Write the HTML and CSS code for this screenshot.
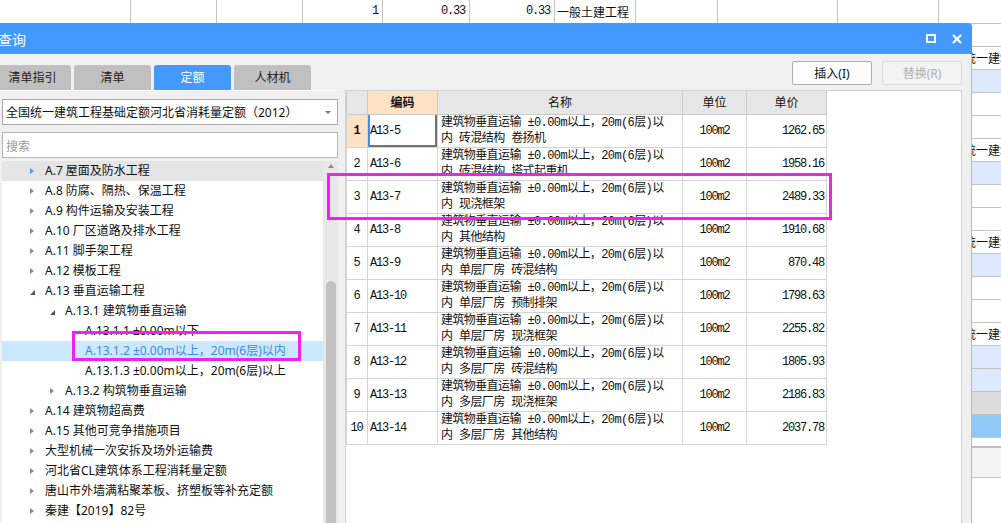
FILE: index.html
```html
<!DOCTYPE html>
<html lang="zh-CN">
<head>
<meta charset="utf-8">
<title>查询</title>
<link rel="stylesheet" href="styles.css">
</head>
<body>
<div class="sheet">
  <div class="sheet-head">
    <div class="sc c1"></div>
    <div class="sc c2"></div>
    <div class="sc c3"></div>
    <div class="sc c4 num">1</div>
    <div class="sc c5 num">0.33</div>
    <div class="sc c6 num">0.33</div>
    <div class="sc c7 txt">一般土建工程</div>
    <div class="sc c8"></div>
    <div class="sc c9"></div>
    <div class="sc c10"></div>
    <div class="sc c11"></div>
  </div>
  <div class="sr"></div>
  <div class="sr">全国统一建筑工程基础定额河北省消耗量定额</div>
  <div class="sr lb"></div>
  <div class="sr"></div>
  <div class="sr"></div>
  <div class="sr">全国统一建筑工程基础定额河北省消耗量定额</div>
  <div class="sr lb"></div>
  <div class="sr"></div>
  <div class="sr"></div>
  <div class="sr">全国统一建筑工程基础定额河北省消耗量定额</div>
  <div class="sr lb"></div>
  <div class="sr"></div>
  <div class="sr"></div>
  <div class="sr">全国统一建筑工程基础定额河北省消耗量定额</div>
  <div class="sr lb"></div>
  <div class="sr lb"></div>
  <div class="sr gr"></div>
  <div class="sr bl"></div>
  <div class="sr short"></div>
  <div class="sr foot"></div>
</div>

<div class="dialog">
  <div class="titlebar">
    <span class="title">查询</span>
    <div class="win-btns">
      <span class="ico-max"></span>
      <svg class="ico-close" width="10" height="10" viewBox="0 0 10 10"><path d="M1 1L9 9M9 1L1 9" stroke="#fff" stroke-width="2.2" fill="none"/></svg>
    </div>
  </div>
  <div class="toolbar">
    <div class="tabs">
      <div class="tab">清单指引</div>
      <div class="tab">清单</div>
      <div class="tab active">定额</div>
      <div class="tab">人材机</div>
    </div>
    <div class="actions">
      <button class="btn">插入(I)</button>
      <button class="btn" disabled>替换(R)</button>
    </div>
  </div>
  <div class="main">
    <div class="left">
      <div class="combo"><span class="combo-text">全国统一建筑工程基础定额河北省消耗量定额（2012）</span><span class="caret"></span></div>
      <input class="search" type="text" placeholder="搜索">
      <div class="tree-wrap">
        <ul class="tree">
          <li class="node l1 hover"><span class="tw closed"></span>A.7 屋面及防水工程</li>
          <li class="node l1"><span class="tw closed"></span>A.8 防腐、隔热、保温工程</li>
          <li class="node l1"><span class="tw closed"></span>A.9 构件运输及安装工程</li>
          <li class="node l1"><span class="tw closed"></span>A.10 厂区道路及排水工程</li>
          <li class="node l1"><span class="tw closed"></span>A.11 脚手架工程</li>
          <li class="node l1"><span class="tw closed"></span>A.12 模板工程</li>
          <li class="node l1"><span class="tw open"></span>A.13 垂直运输工程</li>
          <li class="node l2"><span class="tw open"></span>A.13.1 建筑物垂直运输</li>
          <li class="node l3"><span class="tw"></span>A.13.1.1 ±0.00m以下</li>
          <li class="node l3 selected"><span class="tw"></span>A.13.1.2 ±0.00m以上，20m(6层)以内</li>
          <li class="node l3"><span class="tw"></span>A.13.1.3 ±0.00m以上，20m(6层)以上</li>
          <li class="node l2"><span class="tw closed"></span>A.13.2 构筑物垂直运输</li>
          <li class="node l1"><span class="tw closed"></span>A.14 建筑物超高费</li>
          <li class="node l1"><span class="tw closed"></span>A.15 其他可竞争措施项目</li>
          <li class="node l1"><span class="tw closed"></span>大型机械一次安拆及场外运输费</li>
          <li class="node l1"><span class="tw closed"></span>河北省CL建筑体系工程消耗量定额</li>
          <li class="node l1"><span class="tw closed"></span>唐山市外墙满粘聚苯板、挤塑板等补充定额</li>
          <li class="node l1"><span class="tw closed"></span>秦建【2019】82号</li>
        </ul>
        <div class="vscroll"><span class="up"></span><span class="thumb"></span></div>
      </div>
    </div>
    <div class="right">
      <table class="grid">
        <colgroup><col class="k0"><col class="k1"><col class="k2"><col class="k3"><col class="k4"></colgroup>
        <thead>
          <tr><th class="rh"></th><th class="cur">编码</th><th>名称</th><th>单位</th><th>单价</th></tr>
        </thead>
        <tbody>
          <tr><td class="rn cur">1</td><td class="code focus">A13-5</td><td class="name">建筑物垂直运输 ±0.00m以上，20m(6层)以<br>内 砖混结构 卷扬机</td><td class="unit">100m2</td><td class="price">1262.65</td></tr>
          <tr><td class="rn">2</td><td class="code">A13-6</td><td class="name">建筑物垂直运输 ±0.00m以上，20m(6层)以<br>内 砖混结构 塔式起重机</td><td class="unit">100m2</td><td class="price">1958.16</td></tr>
          <tr><td class="rn">3</td><td class="code">A13-7</td><td class="name">建筑物垂直运输 ±0.00m以上，20m(6层)以<br>内 现浇框架</td><td class="unit">100m2</td><td class="price">2489.33</td></tr>
          <tr><td class="rn">4</td><td class="code">A13-8</td><td class="name">建筑物垂直运输 ±0.00m以上，20m(6层)以<br>内 其他结构</td><td class="unit">100m2</td><td class="price">1910.68</td></tr>
          <tr><td class="rn">5</td><td class="code">A13-9</td><td class="name">建筑物垂直运输 ±0.00m以上，20m(6层)以<br>内 单层厂房 砖混结构</td><td class="unit">100m2</td><td class="price">870.48</td></tr>
          <tr><td class="rn">6</td><td class="code">A13-10</td><td class="name">建筑物垂直运输 ±0.00m以上，20m(6层)以<br>内 单层厂房 预制排架</td><td class="unit">100m2</td><td class="price">1798.63</td></tr>
          <tr><td class="rn">7</td><td class="code">A13-11</td><td class="name">建筑物垂直运输 ±0.00m以上，20m(6层)以<br>内 单层厂房 现浇框架</td><td class="unit">100m2</td><td class="price">2255.82</td></tr>
          <tr><td class="rn">8</td><td class="code">A13-12</td><td class="name">建筑物垂直运输 ±0.00m以上，20m(6层)以<br>内 多层厂房 砖混结构</td><td class="unit">100m2</td><td class="price">1805.93</td></tr>
          <tr><td class="rn">9</td><td class="code">A13-13</td><td class="name">建筑物垂直运输 ±0.00m以上，20m(6层)以<br>内 多层厂房 现浇框架</td><td class="unit">100m2</td><td class="price">2186.83</td></tr>
          <tr><td class="rn">10</td><td class="code">A13-14</td><td class="name">建筑物垂直运输 ±0.00m以上，20m(6层)以<br>内 多层厂房 其他结构</td><td class="unit">100m2</td><td class="price">2037.78</td></tr>
        </tbody>
      </table>
    </div>
  </div>
</div>

<div class="mark mark-tree"></div>
<div class="mark mark-row"></div>
</body>
</html>
```

FILE: styles.css
```css
* { box-sizing: border-box; margin: 0; padding: 0; }

html, body { background: #fff; }

body {
  width: 1001px;
  height: 523px;
  overflow: hidden;
  position: relative;
  font-family: "Noto Sans", "Noto Sans CJK SC", sans-serif;
  font-size: 12px;
  color: #111;
}

/* ---------- background spreadsheet ---------- */
.sheet { width: 1001px; }

.sheet-head {
  display: flex;
  height: 24px;
  border-bottom: 1px solid #c4c4c4;
}

.sc {
  flex: none;
  height: 23px;
  border-right: 1px solid #c4c4c4;
  padding: 0 4px 0 3px;
  line-height: 23px;
  white-space: nowrap;
  overflow: hidden;
}
.sc.num {
  text-align: right;
  font-family: "Liberation Mono", monospace;
  letter-spacing: -1.2px;
  font-size: 12px;
}
.sc.txt { font-size: 12px; font-family: "Noto Sans CJK SC", sans-serif; padding-left: 2px; }
.c1 { width: 131px; }
.c2 { width: 86px; }
.c3 { width: 86px; }
.c4 { width: 80px; }
.c5 { width: 87px; }
.c6 { width: 85px; }
.c7 { width: 81px; }
.c8 { width: 82px; }
.c9 { width: 120px; }
.c10 { width: 101px; }
.c11 { flex: 1; border-right: 0; }

.sr {
  height: 23px;
  border-bottom: 1px solid #c4c4c4;
  padding-left: 940px;
  line-height: 22px;
  white-space: nowrap;
  overflow: hidden;
  font-family: "Noto Sans CJK SC", sans-serif;
  font-size: 12px;
  color: #111;
}
.sr.lb { background: #dde9fc; }
.sr.gr { background: #dcdcdc; }
.sr.bl { background: #90c8f8; }
.sr.short { height: 10px; border-bottom: 2px solid #bdbdbd; }
.sr.foot { height: 30px; background: #f3f3f3; }

/* ---------- dialog ---------- */
.dialog {
  position: absolute;
  left: -8px;
  top: 23px;
  width: 980px;
  height: 510px;
  background: #f0f0f0;
  border-right: 1px solid #b8b8b8;
  border-radius: 0 4px 0 0;
  display: flex;
  flex-direction: column;
}

.titlebar {
  flex: none;
  height: 31px;
  margin-right: -1px;
  background: #4499fe;
  border-radius: 0 4px 0 0;
  display: flex;
  align-items: center;
  padding: 0 10px 0 6px;
  color: #fff;
}
.title {
  font-family: "Noto Sans CJK SC", sans-serif;
  font-size: 14px;
  line-height: 20px;
}
.win-btns {
  margin-left: auto;
  display: flex;
  align-items: center;
  gap: 16px;
}
.ico-max {
  display: block;
  width: 10px;
  height: 9px;
  border: 2px solid #fff;
}
.ico-close { display: block; }

.toolbar {
  flex: none;
  height: 36px;
  display: flex;
  justify-content: space-between;
  padding-right: 9px;
}
.tabs {
  display: flex;
  gap: 3px;
  margin-left: 2px;
  margin-top: 11px;
}
.tab {
  width: 77px;
  height: 25px;
  background: #c0c0c0;
  border-radius: 3px 3px 0 0;
  text-align: center;
  line-height: 24px;
  font-size: 12px;
  font-family: "Noto Sans CJK SC", sans-serif;
  color: #222;
}
.tab.active { background: #4499fe; color: #fff; }

.actions {
  display: flex;
  gap: 10px;
  margin-top: 7px;
}
.btn {
  width: 80px;
  height: 24px;
  background: #fdfdfd;
  border: 1px solid #adadad;
  border-radius: 2px;
  font-family: "Noto Sans", "Noto Sans CJK SC", sans-serif;
  font-size: 12px;
  color: #111;
}
.btn:disabled {
  background: #f3f3f3;
  border-color: #d8d8d8;
  color: #b0b0b0;
}

.main {
  flex: 1;
  display: flex;
  min-height: 0;
}

.left {
  flex: none;
  width: 346px;
  padding: 8px 0 0 10px;
  border-top: 1px solid #fff;
  display: flex;
  flex-direction: column;
}
.combo {
  flex: none;
  height: 26px;
  background: #fff;
  border: 1px solid #a9a9a9;
  display: flex;
  align-items: center;
  padding: 0 6px 0 3px;
}
.combo-text {
  flex: 1;
  font-size: 12px;
  font-family: "Noto Sans", "Noto Sans CJK SC", sans-serif;
  white-space: nowrap;
  overflow: hidden;
}
.caret {
  width: 0;
  height: 0;
  border-top: 3px solid #7a7a7a;
  border-left: 3px solid transparent;
  border-right: 3px solid transparent;
}
.search {
  flex: none;
  display: block;
  width: 100%;
  height: 26px;
  margin-top: 7px;
  background: #fff;
  border: 1px solid #b4b4b4;
  padding: 0 3px;
  font-family: "Noto Sans CJK SC", sans-serif;
  font-size: 12px;
  outline: none;
}
.search::placeholder { color: #9a9a9a; }

.tree-wrap {
  flex: 1;
  margin-top: 3px;
  display: flex;
  min-height: 0;
}
.tree {
  flex: 1;
  list-style: none;
  background: #fff;
  overflow: hidden;
}
.node {
  height: 20px;
  display: flex;
  align-items: center;
  white-space: nowrap;
  font-size: 12px;
  line-height: 20px;
  color: #111;
}
.l1 { padding-left: 28px; }
.l2 { padding-left: 48px; }
.l3 { padding-left: 68px; }
.node.hover { background: #e5e5e5; }
.node.selected { background: #cce8ff; color: #3b8ae6; }

.tw {
  flex: none;
  width: 15px;
  height: 20px;
  display: flex;
  align-items: center;
}
.tw.closed::before {
  content: "";
  display: block;
  width: 0;
  height: 0;
  border-left: 4px solid #8c8c8c;
  border-top: 3.5px solid transparent;
  border-bottom: 3.5px solid transparent;
}
.hover .tw.closed::before { border-left-color: #4a9cf5; }
.tw.open::before {
  content: "";
  display: block;
  width: 0;
  height: 0;
  margin-top: 3px;
  border-bottom: 5px solid #555;
  border-left: 5px solid transparent;
}

.vscroll {
  flex: none;
  width: 15px;
  background: #e8e8e8;
  display: flex;
  flex-direction: column;
  align-items: center;
  padding-top: 3px;
}
.up {
  display: block;
  width: 0;
  height: 0;
  border-bottom: 4px solid #8a8a8a;
  border-left: 3.5px solid transparent;
  border-right: 3.5px solid transparent;
}
.thumb {
  display: block;
  width: 10px;
  height: 320px;
  margin-top: 113px;
  background: #c1c1c1;
  border-radius: 5px 5px 0 0;
}

.right {
  flex: none;
  width: 617px;
  margin-left: 7px;
  background: #fff;
  border: 1px solid #d2d2d2;
}

/* ---------- grid ---------- */
.grid {
  border-collapse: collapse;
  table-layout: fixed;
  width: 480px;
}
.k0 { width: 21px; }
.k1 { width: 70px; }
.k2 { width: 245px; }
.k3 { width: 64px; }
.k4 { width: 80px; }

.grid th {
  height: 23px;
  background: #e7e7e7;
  border: 1px solid #c9c9c9;
  border-top: 0;
  font-family: "Noto Sans CJK SC", sans-serif;
  font-weight: normal;
  font-size: 12px;
  line-height: 20px;
  color: #111;
}
.grid th.cur { background: #fde3c4; font-weight: bold; }

.grid td {
  height: 33px;
  border: 1px solid #d4d4d4;
  font-family: "Liberation Mono", "Noto Sans CJK SC", monospace;
  font-size: 12px;
  color: #111;
  white-space: nowrap;
  overflow: hidden;
}
.grid td.rn {
  text-align: center;
  letter-spacing: -1.2px;
  padding-right: 1px;
}
.grid td.rn.cur { background: #fde3c4; font-weight: bold; }
.grid td.code {
  padding-left: 2px;
  letter-spacing: -1.2px;
}
.grid td.code.focus {
  box-shadow: inset 2px 0 0 #3d8ef0, inset -2px -2px 0 #727272;
}
.grid td.name {
  vertical-align: top;
  padding-left: 3px;
  line-height: 16px;
  letter-spacing: -0.6px;
}
.grid td.unit {
  text-align: center;
  letter-spacing: -1.2px;
}
.grid td.price {
  text-align: right;
  padding-right: 2px;
  letter-spacing: -1.2px;
}

/* ---------- annotation marks ---------- */
.mark {
  position: absolute;
  border: 3px solid #f020f0;
}
.mark-tree { left: 72px; top: 331px; width: 229px; height: 30px; }
.mark-row { left: 327px; top: 173px; width: 505px; height: 47px; }
```
